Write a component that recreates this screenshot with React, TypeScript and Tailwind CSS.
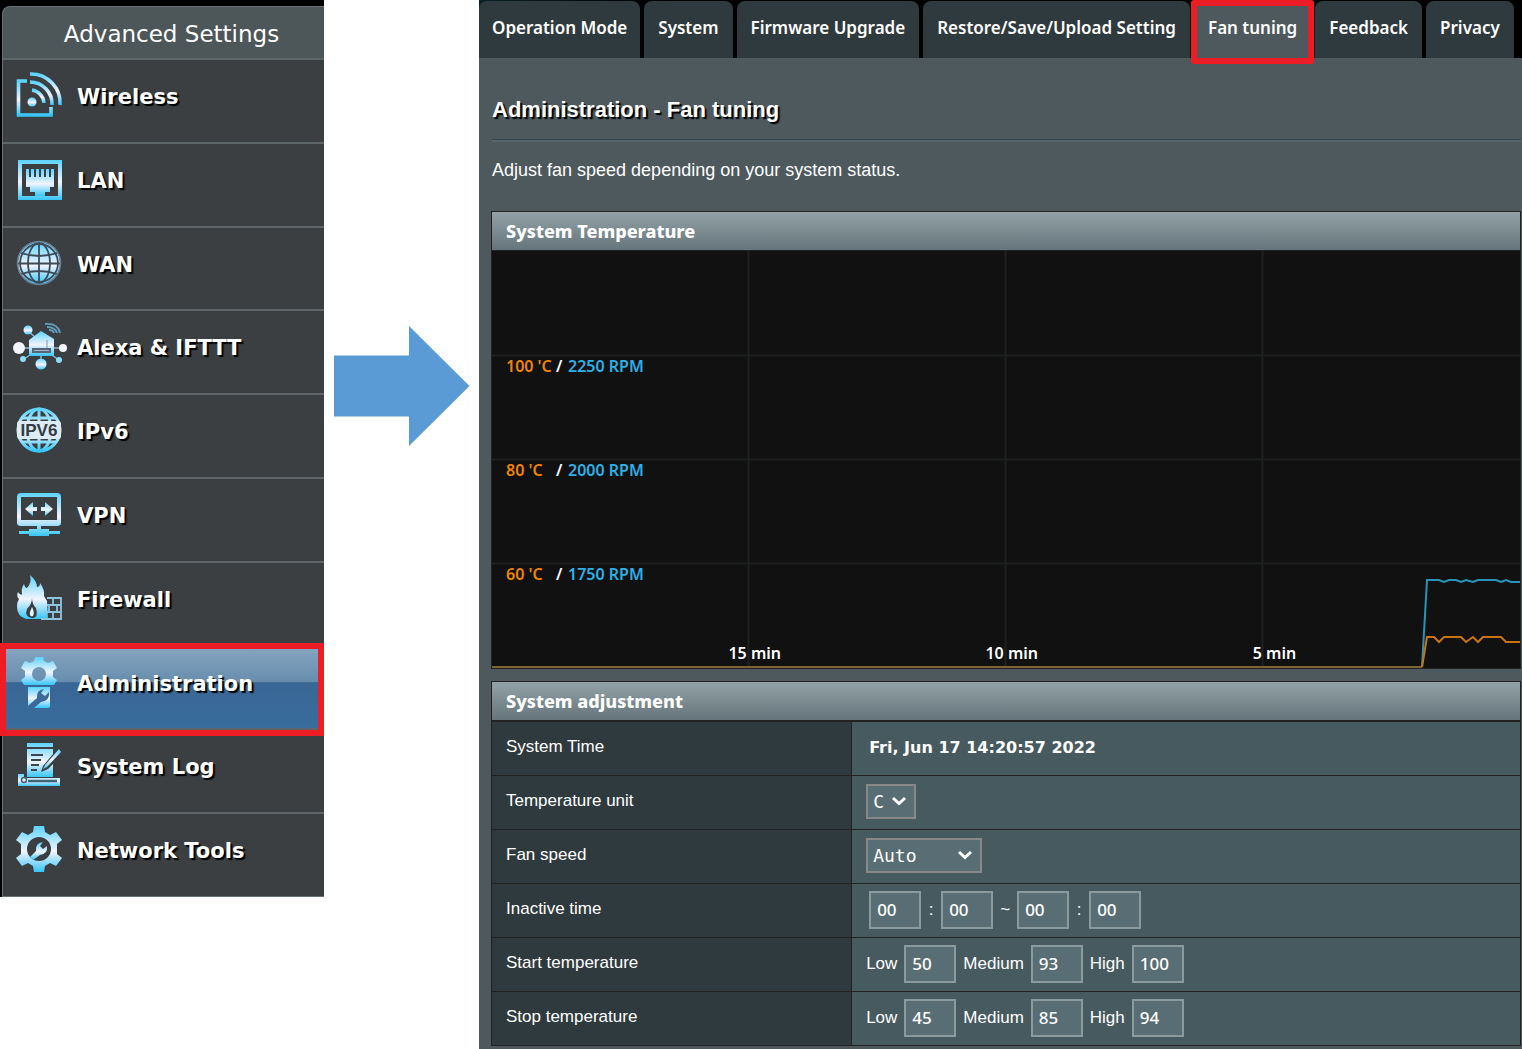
import { ReactNode } from "react";

const sans = "font-['Liberation_Sans',Arial,sans-serif]";
const verdana = "font-['DejaVu_Sans',Verdana,sans-serif]";
const lucida = "font-['Noto_Sans','Open_Sans',sans-serif]";
const mono = "font-['DejaVu_Sans_Mono',monospace]";

const ICE = "url(#ice)";

const WirelessIcon = () => (
  <svg viewBox="0 0 48 48" className="size-12" fill="none" stroke={ICE} strokeWidth="3.6">
    <path d="M12 10H3.5V44H36V36" />
    <path d="M15 3A29 29 0 0 1 45 34" />
    <path d="M15 11A22 22 0 0 1 37 34" />
    <path d="M17 19A14 14 0 0 1 29 32" />
    <circle cx="17" cy="31" r="4.5" fill={ICE} stroke="none" />
  </svg>
);

const LanIcon = () => (
  <svg viewBox="0 0 48 48" className="size-12" fill={ICE}>
    <path fillRule="evenodd" d="M3 5H47V45H3ZM7 9V41H43V9Z" />
    <path d="M11 14h3v8h2v-8h3v8h2v-8h3v8h2v-8h3v8h2v-8h3v8h2v-8h3v18h-4v5h-5v4H20v-4h-5v-5h-4z" />
  </svg>
);

const WanIcon = () => (
  <svg viewBox="0 0 48 48" className="size-12">
    <circle cx="24" cy="24" r="21" fill={ICE} />
    <g fill="none" stroke="#3e4b57" strokeWidth="1.8">
      <circle cx="24" cy="24" r="19" />
      <path d="M24 3V45M3 24.5H45M6 14Q24 20 42 14M6 35Q24 29 42 35" />
      <ellipse cx="24" cy="24" rx="11" ry="20" />
    </g>
    <circle cx="24" cy="24" r="21.5" fill="none" stroke="#6a8299" strokeWidth="1.5" />
  </svg>
);

const AlexaIcon = () => (
  <svg viewBox="-2 0 56 48" className="h-12 w-14 overflow-visible">
    <path d="M6 26H50M11 37L20 31M46 38L36 31M28 34V42M15 9L22 15" stroke="#8fb4cd" strokeWidth="1.5" />
    <g fill={ICE}>
      <path d="M16 18L28 9L41 17V34H16Z" />
      <circle cx="15" cy="8" r="4.5" />
      <circle cx="28" cy="42" r="5.5" />
    </g>
    <circle cx="10" cy="37" r="3" fill="#8fdcfa" />
    <circle cx="46" cy="38" r="3" fill="#8fdcfa" />
    <circle cx="6" cy="26" r="6" fill="#f2f4ff" />
    <circle cx="50" cy="26" r="4" fill="#f2f4ff" />
    <path d="M19 26H38V31H19Z" fill="#566478" />
    <path d="M34 18V26" stroke="#8794a6" />
    <path d="M21 28.5H36" stroke="#aab6c6" />
    <path d="M32 2Q45 1 47 11M34 5Q42 5 44 11M36 8Q40 8 41 11" fill="none" stroke="#5f9fbf" strokeWidth="1.8" />
  </svg>
);

const Ipv6Icon = () => (
  <svg viewBox="0 0 48 48" className="size-12">
    <g fill="none" stroke={ICE} strokeWidth="3">
      <circle cx="24" cy="24" r="21" />
      <ellipse cx="24" cy="24" rx="12" ry="21" />
      <path d="M24.01 3V45M7 12H41M7 36H41" />
    </g>
    <rect x="2" y="15" width="44" height="18" rx="3" fill="#dcebf6" />
    <text x="24" y="30" textAnchor="middle" className="fill-[#333b42] font-['Liberation_Sans',sans-serif] text-[17px] font-bold [text-shadow:none]">
      IPV6
    </text>
  </svg>
);

const VpnIcon = () => (
  <svg viewBox="0 0 48 48" className="size-12" fill={ICE}>
    <path fillRule="evenodd" d="M6 3H42Q46 3 46 7V33Q46 36 42 36H26V39H34V41H45V44H34V46H14V44H4V41H14V39H22V36H6Q2 36 2 33V7Q2 3 6 3ZM6 7V30H42V7Z" />
    <path d="M10 19L18 12V17H22V21H18V26ZM38 19L30 12V17H26V21H30V26Z" />
  </svg>
);

const FirewallIcon = () => (
  <svg viewBox="0 0 48 48" className="size-12">
    <path
      fill={ICE}
      d="M15 1Q22 7 22 13Q25 13 25 9Q30 16 29 22L32 27L33 45H11Q2 42 2 33Q2 28 4 25Q1 22 3 18Q6 22 7 20Q6 14 9 10Q10 14 12 14Q17 9 15 1Z"
    />
    <path fill="#3b3f41" d="M17 24Q17 30 21 34Q24 44 17 44Q9 43 12 35Q17 30 17 24Z" />
    <path fill="#e8f6ff" d="M17 33Q20 39 18 42Q14 43 15 38Z" />
    <path d="M32 24H46V45H26M32 31H46M29 38H46M38 24V31M34 31V38M42 31V38M38 38V45" fill="none" stroke="#8fc4de" strokeWidth="1.8" />
  </svg>
);

const AdministrationIcon = () => (
  <svg viewBox="0 2 48 54" className="h-[54px] w-12 overflow-visible">
    <path fillRule="evenodd" fill={ICE} d="M20 1H28L29 5L33 7L38 5L42 12L38 15V21L42 24L39 29H9L6 24L10 21V15L6 12L10 5L15 7L19 5ZM24 11A7 7 0 1 0 24 25A7 7 0 1 0 24 11Z" />
    <path fill={ICE} d="M13 31H35V50Q35 52 33 52H13Z" />
    <path fill="#3c6a99" d="M13 50L22 42Q21 34 29 33L26 37L30 40L34 36Q35 45 26 46L19 52H13Z" />
  </svg>
);

const SystemLogIcon = () => (
  <svg viewBox="0 0 48 48" className="size-12">
    <path fill={ICE} d="M12 2H38V6H12ZM12 8H38V13L28 25L26 31L33 28L38 23V36H12Z" />
    <path fill={ICE} d="M44 8L46 11L32 26L28 28L30 24Z" />
    <path d="M16 14H28M16 19H26M16 24H24M16 29H22" stroke="#3b4650" strokeWidth="2" />
    <path fill={ICE} d="M3 33H9V37H45V45H3Z" />
    <path d="M13 40H42" stroke="#3f6379" strokeWidth="2.5" />
    <circle cx="9" cy="39" r="2.5" fill="none" stroke="#3f6379" strokeWidth="1.5" />
  </svg>
);

const NetworkToolsIcon = () => (
  <svg viewBox="0 0 48 48" className="size-12">
    <path
      fillRule="evenodd"
      fill={ICE}
      d="M19 1H29L30 7L35 10L41 7L47 15L42 19V29L47 33L41 41L35 38L30 41L29 47H19L18 41L13 38L7 41L1 33L6 29V19L1 15L7 7L13 10L18 7ZM24 12A12 12 0 1 0 24 36A12 12 0 1 0 24 12Z"
    />
    <path fill={ICE} d="M15 32L21 26Q20 18 28 17L25 21L28 24L32 21Q33 29 25 30L18 35Z" />
  </svg>
);

const menu: { label: string; icon: ReactNode }[] = [
  { label: "Wireless", icon: <WirelessIcon /> },
  { label: "LAN", icon: <LanIcon /> },
  { label: "WAN", icon: <WanIcon /> },
  { label: "Alexa & IFTTT", icon: <AlexaIcon /> },
  { label: "IPv6", icon: <Ipv6Icon /> },
  { label: "VPN", icon: <VpnIcon /> },
  { label: "Firewall", icon: <FirewallIcon /> },
  { label: "Administration", icon: <AdministrationIcon /> },
  { label: "System Log", icon: <SystemLogIcon /> },
  { label: "Network Tools", icon: <NetworkToolsIcon /> },
];

const tabs = ["Operation Mode", "System", "Firmware Upgrade", "Restore/Save/Upload Setting", "Fan tuning", "Feedback", "Privacy"];

const Sidebar = () => (
  <nav className={`w-[324px] shrink-0 bg-black pt-[6px] pl-[2px] ${verdana}`}>
    <h2 className="flex h-[52px] items-center justify-center rounded-tl-lg border-t border-l border-[#687073] bg-[#4d5659] pt-1 pl-4 text-[23px] text-white">
      Advanced Settings
    </h2>
    <ul className="grid h-[839px] grid-rows-10 border-b border-l border-[#687073]">
      {menu.map(({ label, icon }) => {
        const active = label === "Administration";
        return (
          <li key={label} className="relative border-t-2 border-[#5e6669]">
            <a
              href="#"
              className={`flex h-full items-start gap-[2px] pt-[11px] text-[21px] font-bold text-white [text-shadow:2px_2px_1px_#000] ${
                active ? "bg-[linear-gradient(#86a5c0,#688dae_43%,#3a6694_44%,#386d9d)]" : "bg-[#3b3f41]"
              }`}
            >
              <span className="flex w-[72px] justify-center">{icon}</span>
              <span className="pt-3 leading-7">{label}</span>
            </a>
            {active && <span className="absolute -top-1 right-0 -bottom-2 -left-[3px] z-10 border-[6px] border-[#ee1c25]" />}
          </li>
        );
      })}
    </ul>
  </nav>
);

const scale = [
  { top: "top-[105px]", temp: "100 'C", rpm: "2250 RPM" },
  { top: "top-[209px]", temp: "80 'C", rpm: "2000 RPM" },
  { top: "top-[313px]", temp: "60 'C", rpm: "1750 RPM" },
];

const TemperatureChart = () => (
  <div className={`relative -mt-px h-[419px] overflow-hidden border border-[#222] bg-[#111] text-[16px] leading-5 font-semibold text-white ${lucida}`}>
    <svg viewBox="0 0 1028 417" preserveAspectRatio="none" className="h-full w-full" fill="none">
      <path d="M256.5 0V417M513.5 0V417M770.5 0V417M0 104.5H1028M0 208.5H1028M0 312.5H1028" stroke="#1f2021" strokeWidth="2" />
      <path d="M0 416H930" stroke="#7a6533" strokeWidth="2" />
      <path d="M930 416L935 329H947L952 331L957 329H964L969 331L974 329L981 331L986 329H1004L1009 331L1014 329L1019 331H1028" stroke="#2794b8" strokeWidth="2" />
      <path d="M930 416L935 386H942L947 391L952 386H969L974 391L981 386L986 391L991 386H1009L1014 391H1028" stroke="#c87410" strokeWidth="2" />
    </svg>
    {scale.map(({ top, temp, rpm }) => (
      <p key={rpm} className={`absolute left-[14px] flex ${top}`}>
        <span className="w-[50px] text-[#f08300]">{temp}</span>
        <span className="w-3">/</span>
        <span className="text-[#2cb0e8]">{rpm}</span>
      </p>
    ))}
    <span className="absolute top-[392px] left-[23%]">15 min</span>
    <span className="absolute top-[392px] left-[48%]">10 min</span>
    <span className="absolute top-[392px] left-[74%]">5 min</span>
  </div>
);

const Row = ({ label, children }: { label: string; children: ReactNode }) => (
  <tr className="h-[54px]">
    <th scope="row" className="w-[35%] border border-[#222] bg-[#2f3a3e] pb-1 pl-[14px] text-left font-normal">
      {label}
    </th>
    <td className="border border-[#222] bg-[#475a5f] pb-[2px] pl-[14px]">
      <div className="flex items-center">{children}</div>
    </td>
  </tr>
);

const Box = ({ value, label }: { value: string; label: string }) => (
  <input
    aria-label={label}
    defaultValue={value}
    className={`h-[38px] w-[52px] border-2 border-[#8a9a9d] bg-[#596d74] pl-[6px] text-[17px] font-medium text-white ${lucida}`}
  />
);

const Dropdown = ({ label, value, width }: { label: string; value: string; width: string }) => (
  <div className="relative">
    <select
      aria-label={label}
      defaultValue={value}
      className={`block h-[35px] appearance-none border-2 border-[#888] bg-[#596d74] pl-[5px] text-[18px] text-white ${mono} ${width}`}
    >
      <option>{value}</option>
    </select>
    <svg viewBox="0 0 16 10" className="pointer-events-none absolute top-[12px] right-[9px] h-[10px] w-4" fill="none">
      <path d="M2 2L8 7.5L14 2" stroke="#fff" strokeWidth="3" />
    </svg>
  </div>
);

const Levels = ({ name, values }: { name: string; values: string[] }) => (
  <div className="flex gap-[7px]">
    {["Low", "Medium", "High"].map((level, i) => (
      <label key={level} className="flex items-center gap-[7px]">
        {level}
        <Box value={values[i]} label={`${name} ${level}`} />
      </label>
    ))}
  </div>
);

const SectionTitle = ({ children }: { children: ReactNode }) => (
  <h3 className={`flex h-10 items-center border border-[#222] bg-linear-to-b from-[#93a2a7] to-[#66757b] pl-[14px] text-[18px] font-extrabold text-white ${lucida}`}>
    {children}
  </h3>
);

export default function App() {
  return (
    <div className="flex items-start bg-white">
      <svg className="absolute size-0">
        <linearGradient id="ice" x1="0" y1="0" x2="0" y2="1">
          <stop offset="0" stopColor="#5bd3ff" />
          <stop offset="0.55" stopColor="#f2f4ff" />
          <stop offset="1" stopColor="#35c6f8" />
        </linearGradient>
      </svg>

      <Sidebar />

      <svg viewBox="0 0 136 120" className="mt-[326px] mr-[9px] ml-[10px] h-[120px] w-[136px] shrink-0">
        <path d="M0 29.5H75V0L135.5 60L75 120V90.5H0Z" fill="#5b9bd5" />
      </svg>

      <main className={`min-w-0 flex-1 bg-[#4d595d] text-[18px] text-white ${sans}`}>
        <div className={`flex h-[58px] gap-1 bg-linear-to-r from-[#0b2328] to-black to-25% pt-px text-[17px] ${lucida}`}>
          {tabs.map((tab) => {
            const active = tab === "Fan tuning";
            return (
              <a
                key={tab}
                href="#"
                className={`relative flex rounded-t-lg px-[14px] pt-[14px] leading-[26px] font-semibold whitespace-nowrap first:px-[13px] ${
                  active ? "bg-[#4d595d]" : "bg-[#2f3a3e]"
                }`}
              >
                {tab}
                {active && <span className="absolute -inset-x-[3px] -top-px -bottom-[6px] z-10 rounded-[3px] border-[6px] border-[#ee1c25]" />}
              </a>
            );
          })}
        </div>

        <div className="pr-px pb-[3px] pl-3">
          <div className="ml-px pt-9">
            <h1 className="text-[22px] leading-8 font-bold [text-shadow:2px_2px_1px_#000]">Administration - Fan tuning</h1>
            <hr className="mt-[13px] h-[3px] border-t border-b-2 border-t-[#37444a] border-b-[#56666d]" />
            <p className="mt-4 leading-6">Adjust fan speed depending on your system status.</p>
          </div>

          <section className="mt-[29px]">
            <SectionTitle>System Temperature</SectionTitle>
            <TemperatureChart />
          </section>

          <section className="mt-3">
            <SectionTitle>System adjustment</SectionTitle>
            <table className="w-full border-collapse text-[17px]">
              <tbody>
                <Row label="System Time">
                  <span className={`pl-[3px] text-[16px] font-bold ${verdana}`}>Fri, Jun 17 14:20:57 2022</span>
                </Row>
                <Row label="Temperature unit">
                  <Dropdown label="Temperature unit" value="C" width="w-[50px]" />
                </Row>
                <Row label="Fan speed">
                  <Dropdown label="Fan speed" value="Auto" width="w-[116px]" />
                </Row>
                <Row label="Inactive time">
                  <div className="flex items-center pl-[3px]">
                    <Box value="00" label="From hour" />
                    <span className="w-5 text-center">:</span>
                    <Box value="00" label="From minute" />
                    <span className="w-6 text-center">~</span>
                    <Box value="00" label="To hour" />
                    <span className="w-5 text-center">:</span>
                    <Box value="00" label="To minute" />
                  </div>
                </Row>
                <Row label="Start temperature">
                  <Levels name="Start" values={["50", "93", "100"]} />
                </Row>
                <Row label="Stop temperature">
                  <Levels name="Stop" values={["45", "85", "94"]} />
                </Row>
              </tbody>
            </table>
          </section>
        </div>
      </main>
    </div>
  );
}
